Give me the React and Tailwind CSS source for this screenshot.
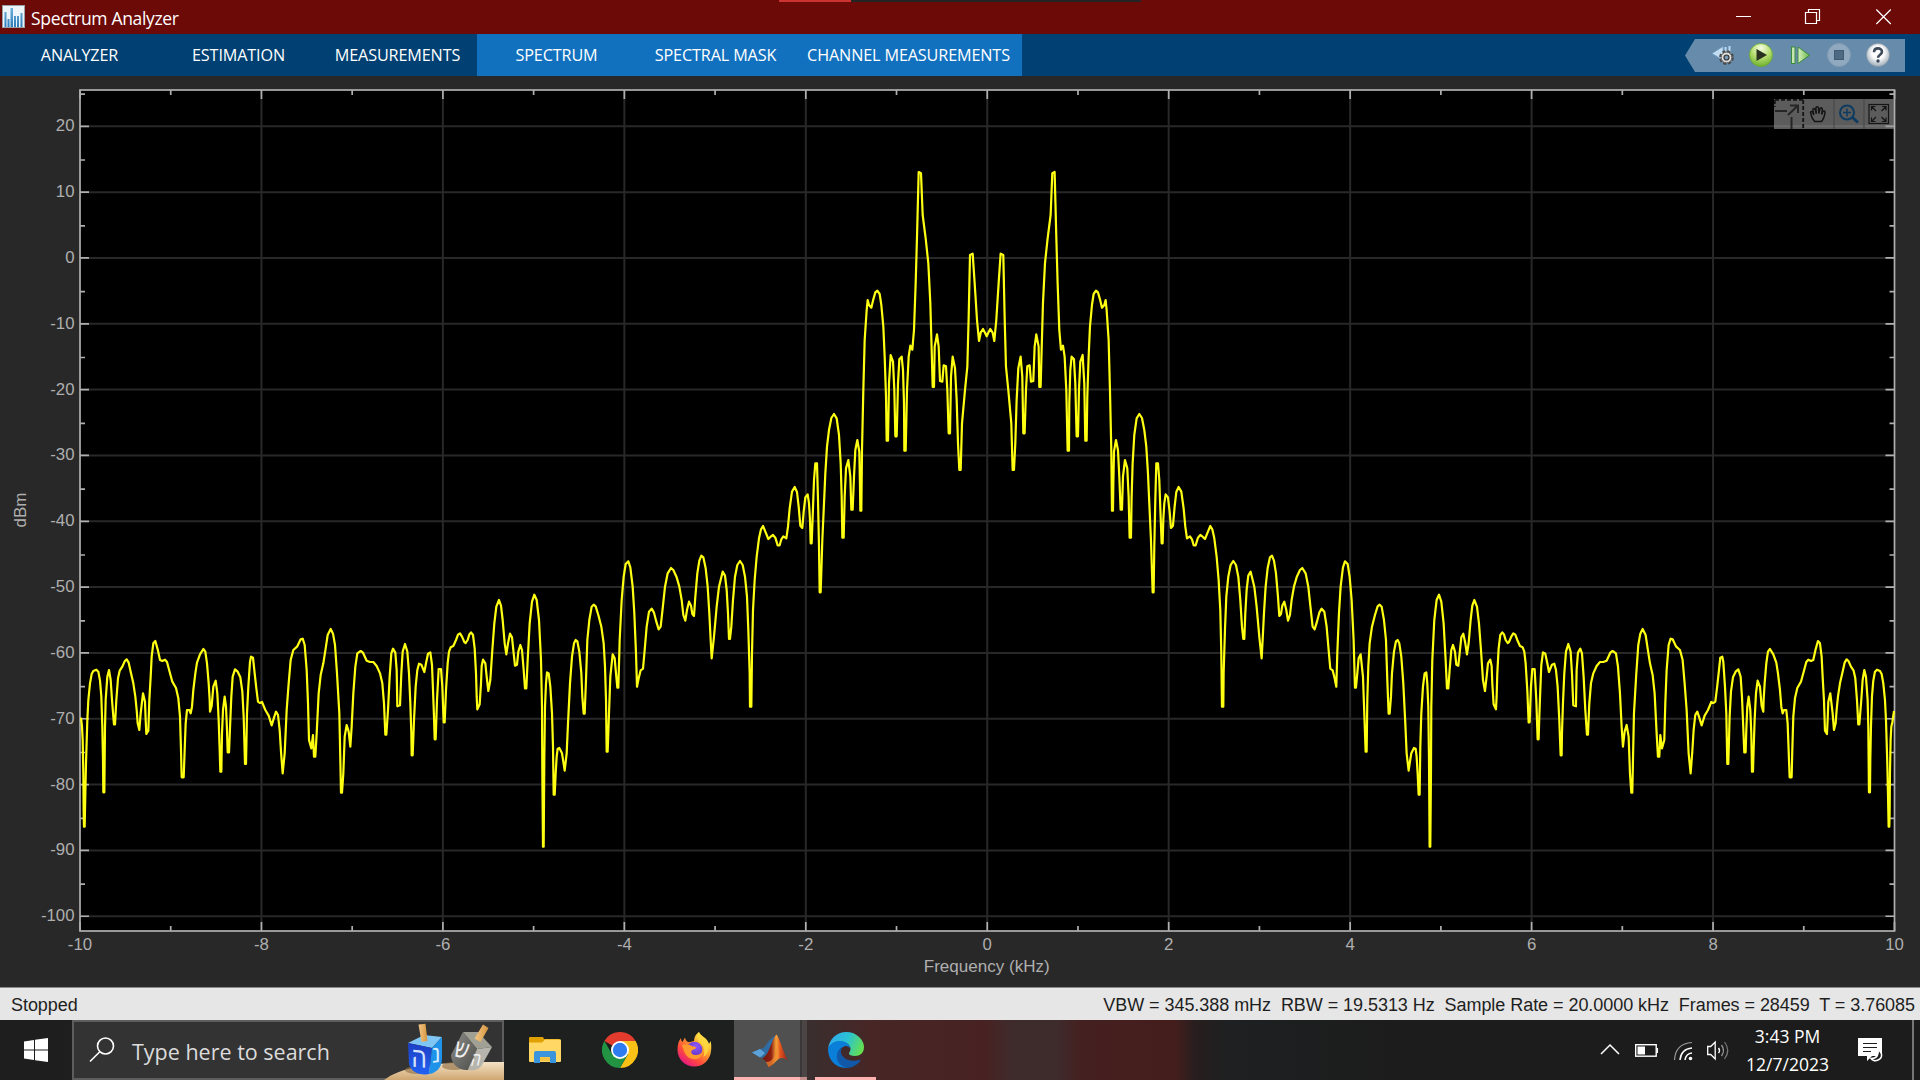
import React from "react";

// Left half of the spectrum trace. Each segment has an origin in page pixels and
// points measured from it in thirds of a pixel; the right half mirrors it.
const SEGMENTS = [
  {
    ox: 70,
    oy: 560,
    pts: "33,473 36,500 38,540 40,640 41,760 42,800 44,800 46,700 48,610 52,480 55,420 60,370 65,342 70,333 79,329 85,335 90,362 94,410 97,500 99,600 100,697 103,697 105,500 107,420 112,350 117,330 122,360 126,420 130,470 132,493 135,493 139,420 144,355 149,332 157,320 164,304 170,298 176,308 182,335 190,370 196,410 200,450 203,490 208,510 212,460 219,400 225,425 227,480 229,522 235,512 238,420 242,350 245,290 250,250 256,243 263,268 270,300 277,303 285,299 291,306 299,336 307,365 318,384 325,415 330,470 333,570 335,652 341,652 344,570 347,490 351,450 358,450 362,460 366,440 370,390 376,340 381,308 390,283 400,267 406,275 411,310 416,370 419,420 420,455 425,438 430,380 437,362 442,400 446,480 449,570 451,635 454,635 456,520 459,450 464,410 468,440 471,510 473,577 477,577 481,480 484,410 488,350 495,328 503,335 511,352 517,395 521,470 525,612 528,612 531,460 535,380 540,305 543,290 549,293 554,340 559,385 564,425 570,429 576,426 586,450 596,467 605,496 612,473 618,455 624,465 629,510 633,575 638,640 644,580 650,450 656,370 662,300 670,270 682,259 692,238 698,236 704,255 710,330 714,430 717,540 724,565 729,525 732,590 736,590 740,520 746,400 752,345 760,310 767,265 773,225 782,207 789,221 795,255 801,340 808,460 811,600 813,698 816,698 820,640 824,530 830,495 836,515 841,560 845,500 850,400 856,320 862,280 872,273 879,278 890,302 900,306 910,306 920,318 930,340 937,370 942,430 946,524 949,524 954,450 959,350 964,280 969,266 976,278 980,330",
  },
  {
    ox: 390,
    oy: 540,
    pts: "22,499 30,496 34,400 38,335 45,312 52,335 57,400 61,490 64,580 65,646 68,646 72,540 77,440 82,390 87,371 94,374 103,396 108,370 114,341 121,337 126,375 129,450 132,530 134,598 137,598 141,480 146,387 153,387 157,440 161,547 164,547 168,450 173,370 177,335 182,322 190,318 198,300 204,284 210,280 216,290 223,306 227,309 233,300 238,283 243,277 249,285 254,325 258,400 260,470 262,508 269,493 273,430 275,378 279,359 286,370 290,410 295,453 301,420 307,330 313,250 319,200 327,180 333,197 338,240 344,310 349,343 354,310 360,281 366,292 371,340 375,377 381,374 385,335 391,315 396,330 401,390 405,445 409,445 413,360 419,250 426,185 433,164 440,180 447,240 453,360 456,500 457,700 459,920 461,920 463,650 465,500 468,430 471,397 476,400 481,440 486,520 489,620 491,764 494,764 497,700 500,650 503,626 508,624 516,640 520,665 524,692 530,640 534,550 540,430 546,350 552,310 557,300 562,304 568,335 574,400 577,470 581,521 584,521 588,420 592,300 598,240 605,200 611,194 617,199 625,225 634,260 641,310 645,380 648,480 650,635 653,635 657,520 661,410 668,343 674,355 678,400 682,443 685,443 689,300 695,180 701,110 707,72 715,64 721,82 728,140 733,220 738,340 741,440 746,415 752,391 759,386 764,330 770,260 777,215 785,206 792,218 799,245 806,268 812,260 817,215 825,140 833,100 843,84 850,90 860,112 868,140 875,180 880,225 886,242 891,210 897,185 903,197 907,222 912,228 916,170 922,100 928,62 934,47 940,52 947,85 953,140 958,220 962,300",
  },
  {
    ox: 660,
    oy: 380,
    pts: "155,835 162,770 170,680 177,620 188,575 195,587 200,630 204,700 207,777 210,777 214,740 219,660 225,590 232,555 240,543 248,555 255,590 261,650 265,750 269,880 270,980 274,980 276,820 279,690 284,600 290,530 297,475 303,448 309,438 316,455 325,477 332,470 339,465 346,473 353,496 359,496 364,478 370,469 379,475 384,440 389,385 396,335 404,321 411,336 416,380 421,437 427,444 431,395 436,352 443,343 447,370 450,420 452,490 455,490 458,410 462,300 466,250 471,250 474,360 477,500 479,637 482,637 487,480 492,370 496,280 501,200 507,150 514,114 522,102 530,115 537,165 542,250 545,350 547,473 551,473 554,350 558,265 565,240 571,290 574,389 578,389 582,290 586,210 592,180 598,215 600,320 601,392",
  },
  {
    ox: 830,
    oy: 150,
    pts: "94,1082 96,900 100,720 104,570 110,480 113,450 117,465 124,473 130,448 136,427 142,422 149,432 154,465 160,530 164,620 168,740 170,872 174,872 177,700 182,615 189,635 193,720 196,859 200,859 204,700 208,628 215,620 219,660 222,760 223,902 227,902 231,720 236,620 241,587 247,599 252,540 257,400 261,260 266,66 273,70 278,195 287,265 295,340 301,460 305,600 308,711 312,711 314,590 321,553 326,590 330,693 337,695 341,646 348,649 352,720 356,850 360,850 363,680 368,620 375,655 380,750 384,880 388,960 392,960 396,820 405,720 412,650 416,500 420,315 428,311 434,400 441,510 447,573 452,548 459,537 465,548 470,559",
  },
];

const LEFT = 80;
const RIGHT = 1894.5;
const TOP = 90;
const BOTTOM = 931;
const CENTER = (LEFT + RIGHT) / 2;
// The last frequency bin lies one step short of +10 kHz, so the trace's own
// axis of symmetry is slightly to the left of 0.
const AXIS = CENTER - 0.6;

const half = SEGMENTS.flatMap(({ ox, oy, pts }) =>
  pts.split(" ").map((p) => {
    const [x, y] = p.split(",").map(Number);
    return [ox + x / 3, oy + y / 3];
  })
);
const mirrored = half.map(([x, y]) => [2 * AXIS - x, y]).reverse().slice(0, -1);
const TRACE = [...half, ...mirrored, [1892.4, 722], [RIGHT - 0.5, 711]]
  .map(([x, y]) => `${x.toFixed(2)},${y.toFixed(2)}`)
  .join(" ");

const xOf = (khz) => CENTER + (khz * (RIGHT - LEFT)) / 20;
const yOf = (db) => 126.3 + (20 - db) * 6.583;

const X_MAJOR = [-10, -8, -6, -4, -2, 0, 2, 4, 6, 8, 10];
const X_MINOR = [-9, -7, -5, -3, -1, 1, 3, 5, 7, 9];
const Y_MAJOR = [20, 10, 0, -10, -20, -30, -40, -50, -60, -70, -80, -90, -100];
const Y_MINOR = [25, 15, 5, -5, -15, -25, -35, -45, -55, -65, -75, -85, -95];

function Plot() {
  return (
    <svg className="block h-[911px] w-[1920px]" viewBox="0 76 1920 911" fontFamily='"Liberation Sans", Arial, sans-serif' fontSize="16.8">
      <rect x={LEFT} y={TOP} width={RIGHT - LEFT} height={BOTTOM - TOP} fill="#000" />
      <g stroke="#282828" strokeWidth="2">
        {X_MAJOR.slice(1, -1).map((v) => (
          <line key={v} x1={xOf(v)} x2={xOf(v)} y1={TOP} y2={BOTTOM} />
        ))}
        {Y_MAJOR.map((v) => (
          <line key={v} x1={LEFT} x2={RIGHT} y1={yOf(v)} y2={yOf(v)} />
        ))}
      </g>
      <g stroke="#afafaf" strokeWidth="1.7" fill="none">
        <rect x={LEFT} y={TOP} width={RIGHT - LEFT} height={BOTTOM - TOP} />
        {X_MAJOR.map((v) => (
          <path key={v} d={`M${xOf(v)} ${TOP}v9M${xOf(v)} ${BOTTOM}v-9`} />
        ))}
        {X_MINOR.map((v) => (
          <path key={v} d={`M${xOf(v)} ${TOP}v5M${xOf(v)} ${BOTTOM}v-5`} />
        ))}
        {Y_MAJOR.map((v) => (
          <path key={v} d={`M${LEFT} ${yOf(v)}h9M${RIGHT} ${yOf(v)}h-9`} />
        ))}
        {Y_MINOR.map((v) => (
          <path key={v} d={`M${LEFT} ${yOf(v) + 0.8}h5M${RIGHT} ${yOf(v) + 0.8}h-5`} />
        ))}
      </g>
      <polyline points={TRACE} fill="none" stroke="#ffff11" strokeWidth="2.2" strokeLinejoin="round" />
      <g fill="#afafaf">
        {X_MAJOR.map((v) => (
          <text key={v} x={xOf(v)} y="950" textAnchor="middle">
            {v}
          </text>
        ))}
        {Y_MAJOR.map((v) => (
          <text key={v} x="74.5" y={yOf(v) + 5} textAnchor="end">
            {v}
          </text>
        ))}
        <text x={CENTER - 0.5} y="972" textAnchor="middle" fontSize="17.4" textLength="126" lengthAdjust="spacingAndGlyphs">
          Frequency (kHz)
        </text>
        <text transform="translate(26 510) rotate(-90)" textAnchor="middle" fontSize="17">
          dBm
        </text>
      </g>
    </svg>
  );
}

function PlotTools() {
  return (
    <svg className="absolute left-[1774px] top-[23px] h-[30px] w-[120px]" viewBox="0 0 120 30" fill="none">
      <rect width="120" height="30" fill="#9a9a9a" fillOpacity=".6" />
      <path d="M60 0v30M90 0v30" stroke="#444" />
      <path d="M1 .9h29M29.2 1v29M.8 1v7" stroke="#141414" strokeWidth="1.8" strokeDasharray="4 2" />
      <path d="M1 12h12M17.500 18v12M14 16L24 6.500M16 6.500h8V14" stroke="#262626" strokeWidth="2" />
      <path
        d="M40 22.500c-2-2-2.800-3.500-3.200-5.500l-1-3.500c0-1.500 2-1.500 2.300 0l1 2.500-1-5c0-2 2.200-2 2.500-.3l1 4-.4-5.500c0-2 2.500-2 2.600 0l.4 5.500 1-4.800c.5-1.800 2.500-1.400 2.400.3l-.6 5.300 1-2.700c.6-1.500 2.500-1 2.300.6-.5 4-1.200 6.500-3.500 9.100Z"
        stroke="#141414"
        strokeWidth="1.500"
        transform="translate(.7 0)"
      />
      <circle cx="73" cy="13.500" r="7" stroke="#0e3b60" strokeWidth="2" />
      <path d="M73 9.500v8M69 13.500h8" stroke="#0e3b60" strokeWidth="1.500" />
      <path d="M78.500 18.500l5.500 5" stroke="#0e3b60" strokeWidth="3" />
      <g stroke="#141414" strokeWidth="1.200">
        <rect x="95" y="5.500" width="19.500" height="19" />
        <path d="M102 12l-4.500-4.500m0 4v-4h4M107.500 12l4.500-4.500m0 4v-4h-4M102 18l-4.500 4.500m0-4v4h4M107.500 18l4.500 4.500m0-4v4h-4" />
      </g>
    </svg>
  );
}

function QuickAccess() {
  return (
    <svg className="h-[33px] w-[220px]" viewBox="1685 39 220 33" fill="none">
      <defs>
        <radialGradient id="run" cx=".5" cy=".2" r=".9">
          <stop offset="0" stopColor="#f4fbe2" />
          <stop offset=".45" stopColor="#b9df74" />
          <stop offset="1" stopColor="#5ba51c" />
        </radialGradient>
        <linearGradient id="step" x1="0" x2="1">
          <stop stopColor="#d8f0c0" />
          <stop offset="1" stopColor="#6cb84a" />
        </linearGradient>
        <radialGradient id="help" cx=".5" cy=".4" r=".65">
          <stop offset=".4" stopColor="#fff" />
          <stop offset="1" stopColor="#8fa0ad" />
        </radialGradient>
      </defs>
      <path d="M1685 55.500L1695 39H1905V72H1695Z" fill="#678cab" />
      <path d="M1712 53.500l11-7v5h2v5h-3v3Z" fill="#c3def3" stroke="#6d9cc3" strokeWidth=".7" />
      <path d="M1725.500 47v6M1729.500 46v6" stroke="#b9daf3" strokeWidth="2" />
      <circle cx="1726.500" cy="57.500" r="6.300" stroke="#4a4a4a" strokeWidth="2.200" strokeDasharray="3 1.950" />
      <circle cx="1726.500" cy="57.500" r="5.400" fill="#dedede" stroke="#555" strokeWidth="1" />
      <circle cx="1726.500" cy="57.500" r="2.500" fill="#7799b5" stroke="#343434" strokeWidth="1.200" />
      <circle cx="1761" cy="55" r="11.500" fill="url(#run)" stroke="#68a92f" strokeWidth=".8" />
      <path d="M1756.500 49v12l10.500-6Z" fill="#293020" />
      <rect x="1791.500" y="47" width="3.500" height="16.500" fill="#c6e7b1" stroke="#3b8a3a" strokeWidth="1" />
      <path d="M1798 47v16.500l11.500-8.250Z" fill="url(#step)" stroke="#3b8a3a" strokeWidth="1" />
      <circle cx="1839" cy="55" r="11.500" fill="#90a9bf" stroke="#7f9bb4" />
      <rect x="1834.500" y="50.500" width="9" height="9" fill="#4e6a82" stroke="#3f5c74" />
      <circle cx="1878" cy="55" r="11.500" fill="url(#help)" stroke="#8796a2" strokeWidth=".6" />
      <path d="M1874 52.300c0-5.300 8-5 8-.5 0 3-4 2.800-4 6" stroke="#3d4a5a" strokeWidth="2.600" />
      <circle cx="1878" cy="61" r="1.700" fill="#3d4a5a" />
    </svg>
  );
}

function TitleBar() {
  return (
    <header className="relative flex h-[34px] items-center justify-between bg-[#6c0a08] text-white">
      <div className="absolute left-[779px] top-0 flex h-[2px]">
        <div className="w-[72px] bg-[#cc3432]" />
        <div className="w-[290px] bg-[#242424]" />
      </div>
      <div className="flex items-center pl-[2px]">
        <svg className="-mt-[2px] h-[23px] w-[23px]" viewBox="0 0 23 23">
          <defs>
            <linearGradient id="bars" x1="0" y1="0" x2="0" y2="1">
              <stop stopColor="#6db0dd" />
              <stop offset="1" stopColor="#2c7cb8" />
            </linearGradient>
          </defs>
          <rect x=".5" y=".5" width="22" height="22" fill="#eef5fa" stroke="#9aa1a6" />
          <path d="M2.500 7h2v15h-2zM5.500 14h2v8h-2zM8.500 3h2.500v19H8.500zM12 11h2v11h-2zM15 11h2v11h-2zM18.500 8h2v14h-2z" fill="url(#bars)" />
        </svg>
        <span className="ml-[6px] mt-[3px] whitespace-nowrap text-[17.5px] leading-none tracking-[-0.33px]">Spectrum Analyzer</span>
      </div>
      <svg className="mr-[28px] h-[34px] w-[160px]" viewBox="1732 0 160 34" fill="none" stroke="#fff" strokeWidth="1.200">
        <path d="M1736 16.500h15M1805.500 12.500h11v11h-11zM1808.500 12.500v-3h11v11h-3M1876.300 9.500l14.500 14.500M1890.800 9.500L1876.300 24" />
      </svg>
    </header>
  );
}

function Tab({ children, width }) {
  return (
    <div className={`flex h-full items-center justify-center whitespace-nowrap pt-px text-[16.2px] tracking-[-0.13px] ${width}`}>
      {children}
    </div>
  );
}

function TabBar() {
  return (
    <nav className="flex h-[42px] items-center bg-[#004072] text-white">
      <Tab width="w-[159px]">ANALYZER</Tab>
      <Tab width="w-[159px]">ESTIMATION</Tab>
      <Tab width="w-[159px]">MEASUREMENTS</Tab>
      <div className="flex h-full bg-[#1171be]">
        <Tab width="w-[159px]">SPECTRUM</Tab>
        <Tab width="w-[159px]">SPECTRAL MASK</Tab>
        <Tab width="w-[227px]">CHANNEL MEASUREMENTS</Tab>
      </div>
      <div className="ml-auto mr-[15px]">
        <QuickAccess />
      </div>
    </nav>
  );
}

function StatusBar() {
  return (
    <div className="flex h-[33px] items-center justify-between whitespace-pre border-t border-[#8a8a8a] bg-[#e6e6e6] pl-[11px] pr-[5px] pt-[2px] font-['Liberation_Sans',Arial,sans-serif] text-[18px] tracking-[-0.05px] text-[#1e1e1e]">
      <span>Stopped</span>
      <span>{"VBW = 345.388 mHz  RBW = 19.5313 Hz  Sample Rate = 20.0000 kHz  Frames = 28459  T = 3.76085"}</span>
    </div>
  );
}

function Dreidels() {
  return (
    <svg className="absolute right-0 top-0 h-[60px] w-[120px]" viewBox="384 1020 120 60" fill="none" fontFamily='"DejaVu Sans", sans-serif'>
      <defs>
        <linearGradient id="sand" x1="0" y1="0" x2="0" y2="1">
          <stop stopColor="#f3e2c4" />
          <stop offset="1" stopColor="#cfa772" />
        </linearGradient>
        <linearGradient id="blueL" x1="0" y1="0" x2="0" y2="1">
          <stop stopColor="#1c3fc4" />
          <stop offset="1" stopColor="#2361f2" />
        </linearGradient>
        <linearGradient id="stick" x1="0" x2="1">
          <stop stopColor="#f3c686" />
          <stop offset="1" stopColor="#d6953f" />
        </linearGradient>
        <linearGradient id="greyL" x1="0" y1="0" x2="1" y2="1">
          <stop stopColor="#8d8d89" />
          <stop offset="1" stopColor="#4d4d4a" />
        </linearGradient>
      </defs>
      <path d="M384 1080c16-13 50-19 120-18v18Z" fill="url(#sand)" />
      <ellipse cx="417" cy="1070" rx="12" ry="4" fill="#8c6a41" opacity=".6" />
      <ellipse cx="454" cy="1066" rx="12" ry="4" fill="#8c6a41" opacity=".6" />
      <path d="M408 1043l16-8 18 2-10 11Z" fill="#7fc6f5" />
      <path d="M408 1043l24 5-3 26c-9 2-18-2-20-10Z" fill="url(#blueL)" />
      <path d="M432 1048l10-11v21c0 9-5 15-13 16Z" fill="#1f92ea" />
      <path d="M418.500 1024.500l7-.8 2 17.300-6 1Z" fill="url(#stick)" />
      <text transform="translate(411 1066.500) skewY(5) scale(.8 1)" fontSize="31" fill="#d3e1fb">ה</text>
      <text transform="translate(432 1063) skewY(-8) scale(.8 1)" fontSize="27" fill="#d6ecfd">נ</text>
      <path d="M463 1032l15 0 14 15-15 2Z" fill="#a0a194" />
      <path d="M463 1032l14 17-9 21c-9 1-17-6-17-15Z" fill="url(#greyL)" />
      <path d="M477 1049l15-2-10 18c-3 5-9 6-14 5Z" fill="#b5b5ad" />
      <path d="M483 1024.500l5.500 3.500-8 14-6-3.500Z" fill="url(#stick)" />
      <text transform="translate(453 1056) rotate(14) scale(.72 1)" fontSize="28" fill="#f0f0f0">ש</text>
      <text transform="translate(469.500 1066) rotate(-4) skewX(-18) scale(.75 1)" fontSize="21" fill="#f0f0f0">ה</text>
    </svg>
  );
}

function FolderIcon() {
  return (
    <svg className="h-[28px] w-[34px]" viewBox="0 0 34 28">
      <path d="M1 2q0-1 1-1h13l1 2h15q1 0 1 1v5H1z" fill="#dfa000" />
      <path d="M1 6.500h13l3-3h15.500q.5 0 .5.500V25q0 1-1 1H2q-1 0-1-1z" fill="#ffd765" />
      <path d="M6 27V17q0-2 2-2h18q2 0 2 2v10h-6v-6H12v6z" fill="#3b95dc" />
      <path d="M12 21h10v4H12z" fill="#f5c344" />
    </svg>
  );
}

function ChromeIcon() {
  return (
    <svg className="h-[36px] w-[36px]" viewBox="0 0 36 36">
      <path d="M2.400 9A18 18 0 0 1 33.600 9L18 18z" fill="#e33b2e" />
      <path d="M18 9H33.600A18 18 0 0 1 18 36l7.800-13.500z" fill="#fbc116" />
      <path d="M2.400 9A18 18 0 0 0 18 36l7.800-13.500L10.200 22.500z" fill="#229342" />
      <circle cx="18" cy="18" r="9" fill="#fff" />
      <circle cx="18" cy="18" r="7.200" fill="#2f7cf0" />
    </svg>
  );
}

function FirefoxIcon() {
  return (
    <svg className="h-[36px] w-[36px]" viewBox="0 0 36 36">
      <defs>
        <linearGradient id="fox" x1=".85" y1=".1" x2=".2" y2=".95">
          <stop stopColor="#fff44f" />
          <stop offset=".35" stopColor="#ffa32b" />
          <stop offset=".7" stopColor="#ff4a3d" />
          <stop offset="1" stopColor="#e31587" />
        </linearGradient>
        <radialGradient id="globe" cx=".6" cy=".3" r=".8">
          <stop stopColor="#9059ff" />
          <stop offset="1" stopColor="#5b2bb8" />
        </radialGradient>
      </defs>
      <path d="M23 0c1 4 9 6 10 12l1.500-3C36 14 35 20 34.500 22 32 30 26 34.500 18.500 34.500 9 34.500 1.500 27 1.500 18c0-5 1-9 3.500-12 0 2 .5 3 1.500 4L9 5.500c.5 3 2 4.500 4 4.800L18 9c0-4 2-7 5-9z" fill="url(#fox)" />
      <circle cx="18.500" cy="17.500" r="7.800" fill="url(#globe)" />
      <path d="M6 13c5-2 8 0 11 1.500 2 0 3 .5 3 1.500-1 1.500-4 1.500-4.500 3-1 2 1 4 4.500 4 3 0 5-1.500 6.500-3C26 26 21 28 17 27 10 26 8 20 6 13z" fill="#ff9a2e" />
      <path d="M23 0c1 4 9 6 9.500 15 0 5-2 8-5 10 2-7 0-12-4-15-3-3-3-7-.5-10z" fill="#ffd93f" opacity=".85" />
    </svg>
  );
}

function MatlabIcon() {
  return (
    <svg className="h-[33px] w-[36px]" viewBox="0 0 36 33">
      <defs>
        <linearGradient id="ml" x1="0" x2="1">
          <stop stopColor="#6d1512" />
          <stop offset=".35" stopColor="#8f2012" />
          <stop offset=".55" stopColor="#f9a43a" />
          <stop offset=".7" stopColor="#e4581f" />
          <stop offset="1" stopColor="#9f1f16" />
        </linearGradient>
      </defs>
      <path d="M0 18.500l8-3.500c3 0 4-1 6-4S20 3 23.500 1.500L15 20l-5 4z" fill="#2f6ea5" />
      <path d="M0 18.500l8-3.500 5 4-5 4.500z" fill="#5ba3d8" />
      <path d="M24.500.5c3 3 6 16 11 25.500-3-2-6-3-9-1s-6 7-10 8c-1-4-3-7-6-8.500C17 22 20 4 24.500.5z" fill="url(#ml)" />
      <path d="M24.500 2c1 8 0 16-2.500 21-2 3-4 5-8 5l2.500 5c4-1 7-6 10-8 1-7 0-18-2-23z" fill="#f08a30" opacity=".7" />
    </svg>
  );
}

function EdgeIcon() {
  return (
    <svg className="h-[36px] w-[36px]" viewBox="0 0 36 36">
      <defs>
        <linearGradient id="e1" x1="0" y1=".3" x2="1" y2=".6">
          <stop stopColor="#2fa9ee" />
          <stop offset=".5" stopColor="#2bc3d2" />
          <stop offset="1" stopColor="#66e04c" />
        </linearGradient>
      </defs>
      <path d="M0 17C1 7 9 0 18 0c11 0 18 8 18 15 0 6-4 9-9 9-4 0-6-1-6-2.500 0-1 1.500-2 1.500-4.500 0-4-4.500-7.500-10-7.500C6 9.500 2 12 0 17z" fill="url(#e1)" />
      <path d="M0 17c1.500-5 6.500-8 11.500-8 6 0 10.500 3.500 11 7.500-1.500-2-4-3-6.500-2-5 2-7 6-6 11s5 9.500 11 10.200C9 37.500 0 29 0 17z" fill="#0a7fd9" />
      <path d="M15 15c-2.500 2-3 6 0 9.500 4 4.500 11 5.500 18 3-3 5.500-9 8.500-14.500 8.500C11 34 8 28 9 22c1-4 3-6 6-7z" fill="#1158a8" />
    </svg>
  );
}

function Tray() {
  return (
    <svg className="h-[60px] w-[136px]" viewBox="1598 1020 136 60" fill="none" stroke="#fff" strokeWidth="1.500">
      <path d="M1601 1054l9-9 9 9" />
      <rect x="1635.700" y="1044.700" width="20.500" height="11.500" strokeWidth="1.400" />
      <path d="M1657.300 1048v5" />
      <path d="M1637.500 1046.500h7.500v8h-7.500z" fill="#fff" stroke="none" />
      <circle cx="1690.500" cy="1058.500" r="1.800" fill="#fff" stroke="none" />
      <path d="M1685 1060q1-6.500 7-7M1680 1060q1-11 12-12" />
      <path d="M1674.500 1060q1-16.500 17.500-17.500" stroke="#999" strokeWidth="1.200" />
      <path d="M1707.700 1046.500h3l4.500-4.500v17l-4.500-4.500h-3z" strokeWidth="1.300" />
      <path d="M1718.500 1048q2 2.500 0 5" strokeWidth="1.400" />
      <path d="M1721.500 1045q4 5.500 0 11" stroke="#999" strokeWidth="1.300" />
      <path d="M1724.500 1042q6.500 8.500 0 17" stroke="#777" strokeWidth="1.200" />
    </svg>
  );
}

function TaskBar() {
  return (
    <footer className="flex h-[60px] bg-[#1e1e1e] bg-[linear-gradient(90deg,#1e1e1e_0px,#1e2020_734px,#3a2e2e_810px,#482626_870px,#482222_985px,#3e2c2d_1015px,#3e2c2d_1055px,#452020_1080px,#441e1d_1175px,#281e1e_1195px,#1e2021_1225px,#1c1c1c_1400px,#1c1c1c_1920px)] text-white">
      <div className="flex w-[72px] items-center justify-center">
        <svg className="h-[24px] w-[24px]" viewBox="0 0 24 24" fill="#fff">
          <path d="M0 3.400L10 2v9.500H0zM11 1.800L24 0v11.500H11zM0 12.500h10V22L0 20.600zM11 12.500h13V24l-13-1.800z" />
        </svg>
      </div>
      <div className="relative flex h-[60px] w-[432px] items-center border-2 border-[#5d5d5d] bg-[#333]">
        <svg className="ml-[15px] h-[26px] w-[26px]" viewBox="0 0 26 26" fill="none" stroke="#fff" strokeWidth="1.600">
          <circle cx="16.500" cy="9" r="8" />
          <path d="M10.800 14.700L1 24.500" />
        </svg>
        <span className="ml-[17px] mt-[3px] whitespace-nowrap text-[21.5px] leading-none text-[#dcdcdc]">Type here to search</span>
        <div className="absolute -bottom-[2px] -right-[2px] h-[60px] w-[120px]">
          <Dreidels />
        </div>
      </div>
      <div className="flex w-[82px] items-center justify-center"><FolderIcon /></div>
      <div className="flex w-[68px] items-center justify-center"><ChromeIcon /></div>
      <div className="flex w-[80px] items-center justify-center"><FirefoxIcon /></div>
      <div className="flex w-[66px] items-center justify-center border-b-[3px] border-[#ffb3b1] bg-[#505050] pl-[6px] pt-[3px]"><MatlabIcon /></div>
      <div className="w-[2px] border-b-[3px] border-[#c58f8e] bg-[#393737]" />
      <div className="w-[5px] border-b-[3px] border-[#c58f8e] bg-[#4c4545]" />
      <div className="flex w-[69px] justify-end">
        <div className="flex w-[61px] items-center justify-center border-b-[3px] border-[#ffb3b1] pt-[3px]"><EdgeIcon /></div>
      </div>
      <div className="ml-auto flex">
        <Tray />
        <div className="flex w-[107px] flex-col items-center justify-between py-[5px] text-[17.5px] leading-[22px]">
          <span className="whitespace-nowrap">3:43 PM</span>
          <span className="whitespace-nowrap">12/7/2023</span>
        </div>
        <svg className="h-[60px] w-[71px]" viewBox="1841 1020 71 60" fill="none">
          <path d="M1858 1038h24v18h-10l-5 5v-5h-9z" fill="#fff" />
          <path d="M1863 1043.500h14M1863 1047.500h14M1863 1051.500h8" stroke="#1d1d1d" strokeWidth="1.200" />
          <path d="M1878 1050c4.500 2 5 8 0 10-3 1.500-6 .5-7-1.500 6 0 8-4 7-8.500z" fill="#1d1d1d" stroke="#fff" strokeWidth="1.500" />
        </svg>
        <div className="h-[60px] w-[8px] border-l-2 border-[#777]" />
      </div>
    </footer>
  );
}

export default function App() {
  return (
    <div className="flex h-[1080px] w-[1920px] flex-col overflow-hidden bg-[#282828] font-['Open_Sans','Noto_Sans',sans-serif]">
      <TitleBar />
      <TabBar />
      <main className="relative h-[911px]">
        <Plot />
        <PlotTools />
      </main>
      <StatusBar />
      <TaskBar />
    </div>
  );
}
